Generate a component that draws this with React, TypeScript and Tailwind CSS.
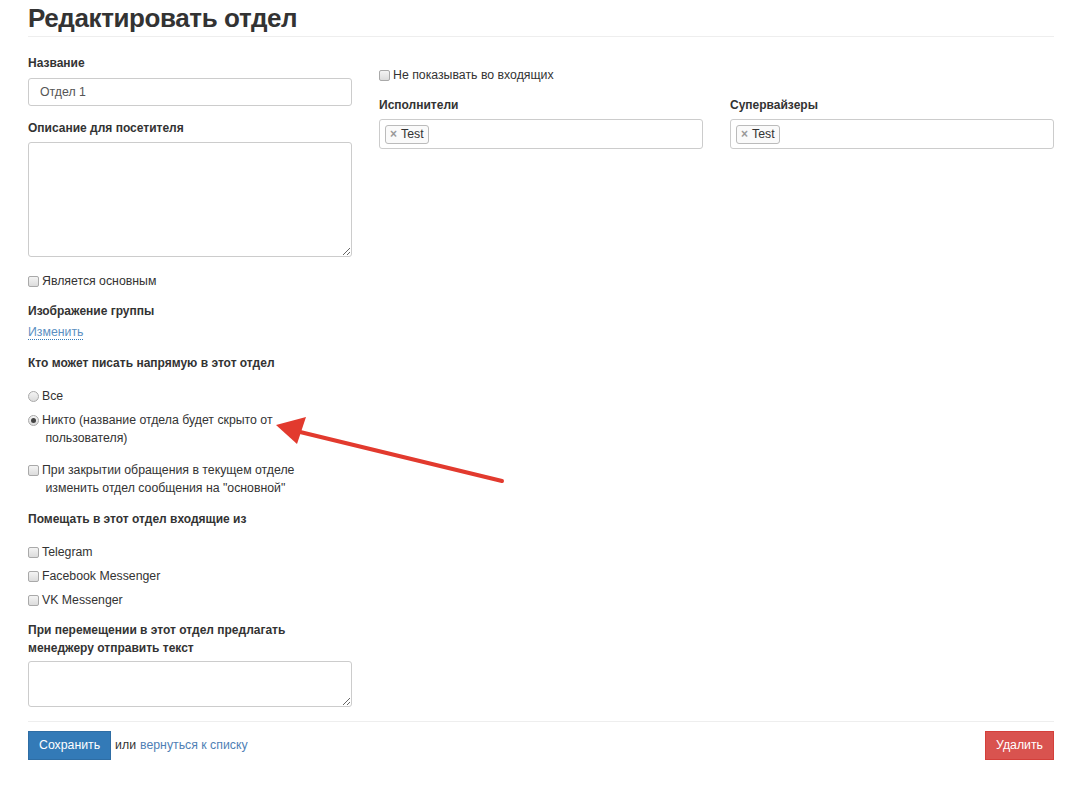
import React from 'react';

const Check = ({ checked = false }: { checked?: boolean }) => (
  <span className="mt-[4px] inline-block h-[11px] w-[11px] shrink-0 rounded-[2px] border border-[#a9a9a9] bg-gradient-to-b from-[#f4f4f4] to-[#dcdcdc]">
    {checked && <span className="block h-full w-full bg-[#555]" />}
  </span>
);

const Radio = ({ checked = false }: { checked?: boolean }) => (
  <span className="mt-[4px] flex h-[11px] w-[11px] shrink-0 items-center justify-center rounded-full border border-[#a9a9a9] bg-gradient-to-b from-[#f4f4f4] to-[#dcdcdc]">
    {checked && <span className="block h-[5px] w-[5px] rounded-full bg-[#444]" />}
  </span>
);

const Label = ({ children, className = '' }: { children: React.ReactNode; className?: string }) => (
  <div className={`text-[12px] font-bold leading-[18px] text-[#333] ${className}`}>{children}</div>
);

const Option = ({
  children,
  radio = false,
  checked = false,
  className = '',
}: {
  children: React.ReactNode;
  radio?: boolean;
  checked?: boolean;
  className?: string;
}) => (
  <div className={`flex items-start gap-[3px] text-[12.3px] leading-[18px] text-[#333] ${className}`}>
    {radio ? <Radio checked={checked} /> : <Check checked={checked} />}
    <span>{children}</span>
  </div>
);

const TagBox = () => (
  <div className="mt-[5px] flex h-[30px] items-center rounded-[3px] border border-[#ccc] bg-white px-[5px]">
    <span className="flex h-[19px] items-center gap-[4px] rounded-[3px] border border-[#bbb] bg-[#fafafa] px-[4px] text-[12.3px] text-[#333]">
      <span className="text-[12px] font-bold text-[#999]">×</span>
      Test
    </span>
  </div>
);

export default function App() {
  return (
    <div className="relative min-h-[788px] bg-white font-['Liberation_Sans',Arial,sans-serif]">
      <div className="px-[28px] pr-[24px]">
        <h1 className="pt-[3px] text-[26px] font-bold leading-[31px] tracking-[-0.4px] text-[#333]">
          Редактировать отдел
        </h1>
        <div className="mt-[2px] border-t border-[#eee]" />

        <div className="mt-[17px] grid grid-cols-3 gap-x-[27px]">
          {/* column 1 */}
          <div className="flex flex-col">
            <Label>Название</Label>
            <div className="mt-[6px] flex h-[28px] items-center rounded-[3px] border border-[#ccc] px-[11px] text-[12.3px] text-[#555]">
              Отдел 1
            </div>

            <Label className="mt-[13px]">Описание для посетителя</Label>
            <textarea className="mt-[5px] h-[115px] rounded-[3px] border border-[#ccc] outline-none" />

            <Option className="mt-[15px]">Является основным</Option>

            <Label className="mt-[12px]">Изображение группы</Label>
            <div className="mt-[3px] text-[12.3px] leading-[18px]">
              <span className="border-b border-dotted border-[#337ab7] text-[#5b8fc2]">Изменить</span>
            </div>

            <Label className="mt-[13px]">Кто может писать напрямую в этот отдел</Label>

            <Option radio className="mt-[15px]">Все</Option>
            <Option radio checked className="mt-[6px] leading-[17px]">
              Никто (название отдела будет скрыто от
              <br />
              &nbsp;пользователя)
            </Option>

            <Option className="mt-[14px]">
              При закрытии обращения в текущем отделе
              <br />
              &nbsp;изменить отдел сообщения на "основной"
            </Option>

            <Label className="mt-[13px]">Помещать в этот отдел входящие из</Label>

            <Option className="mt-[15px]">Telegram</Option>
            <Option className="mt-[6px]">Facebook Messenger</Option>
            <Option className="mt-[6px]">VK Messenger</Option>

            <Label className="mt-[12px] leading-[17px]">
              При перемещении в этот отдел предлагать
              <br />
              менеджеру отправить текст
            </Label>
            <textarea className="mt-[4px] h-[46px] rounded-[3px] border border-[#ccc] outline-none" />
          </div>

          {/* column 2 */}
          <div className="flex flex-col pt-[12px]">
            <Option>Не показывать во входящих</Option>
            <Label className="mt-[12px]">Исполнители</Label>
            <TagBox />
          </div>

          {/* column 3 */}
          <div className="flex flex-col pt-[42px]">
            <Label>Супервайзеры</Label>
            <TagBox />
          </div>
        </div>

        <div className="mt-[14px] border-t border-[#eee]" />

        <div className="mt-[9px] flex items-center justify-between">
          <div className="flex items-center text-[12.3px] text-[#333]">
            <button className="h-[29px] border border-[#2e6da4] bg-[#337ab7] px-[10px] text-[12.3px] text-white">
              Сохранить
            </button>
            <span className="ml-[4px]">или</span>
            <span className="ml-[4px] text-[#4f7fb5]">вернуться к списку</span>
          </div>
          <button className="h-[29px] border border-[#d43f3a] bg-[#d9534f] px-[10px] text-[12.3px] text-white">
            Удалить
          </button>
        </div>
      </div>

      {/* annotation arrow */}
      <svg className="pointer-events-none absolute left-0 top-0" width="1078" height="788">
        <line x1="502" y1="481" x2="296" y2="431" stroke="#e23a2e" strokeWidth="4" strokeLinecap="round" />
        <polygon points="276,425 306,417 297,444" fill="#e23a2e" />
      </svg>
    </div>
  );
}
